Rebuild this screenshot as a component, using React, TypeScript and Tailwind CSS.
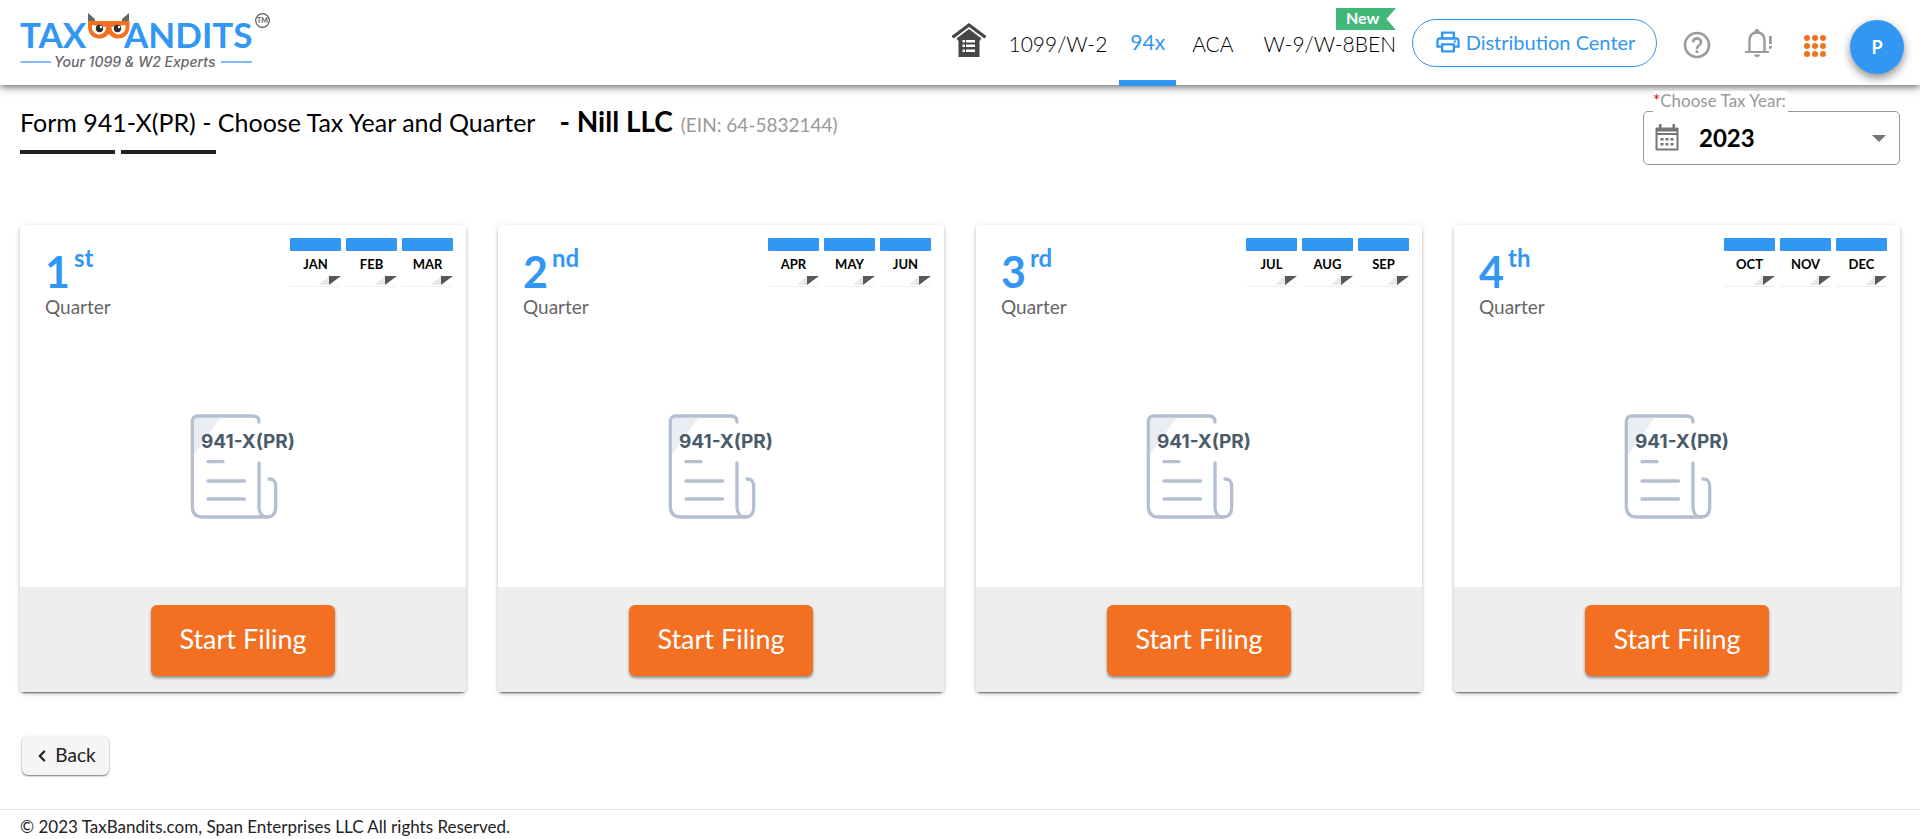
import React, { useState } from 'react';
import { ChevronLeft } from 'lucide-react';
import { MdHelpOutline, MdOutlinePrint } from 'react-icons/md';

interface Quarter {
  number: string;
  suffix: string;
  months: string[];
}

const quarters: Quarter[] = [
  { number: '1', suffix: 'st', months: ['JAN', 'FEB', 'MAR'] },
  { number: '2', suffix: 'nd', months: ['APR', 'MAY', 'JUN'] },
  { number: '3', suffix: 'rd', months: ['JUL', 'AUG', 'SEP'] },
  { number: '4', suffix: 'th', months: ['OCT', 'NOV', 'DEC'] },
];

const Logo = () => (
  <svg width="252" height="64" viewBox="0 0 252 64" role="img" aria-label="TaxBandits" className="block">
    <g fill="#3297f3" fontFamily="Lato, sans-serif" fontWeight="700" fontSize="35">
      <text x="0" y="40">TAX</text>
      <text x="104" y="40">ANDITS</text>
    </g>
    {/* Ears */}
    <path d="M68 5 L75 11 V13 H68 Z M109 5 L102 11 V13 H109 Z" fill="#63696c" />
    {/* Mask */}
    <path
      d="M68 13 H109.500 V18 C109.500 26 105 30.500 98 30.500 C93 30.500 90.500 28 88.700 26 C87 28 84.500 30.500 79.500 30.500 C72.500 30.500 68 26 68 18 Z"
      fill="#f37022"
    />
    <path d="M72 17 L86 19 A7 7 0 0 1 72 20 Z" fill="#fff" />
    <path d="M105.500 17 L91.500 19 A7 7 0 0 0 105.500 20 Z" fill="#fff" />
    <circle cx="79.500" cy="20.500" r="3.700" fill="#2c2f31" />
    <circle cx="97.500" cy="20.500" r="3.700" fill="#2c2f31" />
    <circle cx="81" cy="19" r="1.200" fill="#fff" />
    <circle cx="99" cy="19" r="1.200" fill="#fff" />
    {/* Trademark */}
    <circle cx="242.500" cy="12.500" r="6.800" fill="none" stroke="#55595c" strokeWidth="1.200" />
    <text x="242.500" y="15" textAnchor="middle" fontFamily="Lato, sans-serif" fontWeight="700" fontSize="7" fill="#55595c">
      TM
    </text>
    {/* Tagline */}
    <path d="M0.500 54 H31 M201 54 H232" stroke="#7fbdf8" strokeWidth="2" />
    <text x="34" y="59" fontFamily="Inter, sans-serif" fontStyle="italic" fontWeight="500" fontSize="14" fill="#66696c">
      Your 1099 &amp; W2 Experts
    </text>
  </svg>
);

const HomeIcon = () => (
  <svg width="34" height="34" viewBox="0 0 34 34" fill="#464646">
    <path d="M17 0 L34.500 13 L32.500 15.500 L17 4 L1.500 15.500 L-0.500 13 Z" />
    <path d="M17 6 L29.500 15.500 L27.500 18 V34 H6.500 V18 L4.500 15.500 Z" />
    <path
      d="M10.500 17 H13 V19.500 H10.500 Z M14 17 H23 V19.500 H14 Z M10.500 21.500 H13 V24 H10.500 Z M14 21.500 H23 V24 H14 Z M10.500 26.500 H13 V29 H10.500 Z M14 26.500 H23 V29 H14 Z"
      fill="#fff"
    />
  </svg>
);

const BellIcon = () => (
  <svg width="28" height="28" viewBox="0 0 28 28">
    <path
      d="M4.500 23 V12 C4.500 6 7.500 3.500 12 3.500 C16.500 3.500 19.500 6 19.500 12 V23"
      fill="none"
      stroke="#9b9b9b"
      strokeWidth="2.400"
    />
    <circle cx="12" cy="2.500" r="2.500" fill="#9b9b9b" />
    <path d="M0 22 H24 V24 H0 Z M9 25.500 H15 A3 2.500 0 0 1 9 25.500 Z" fill="#9b9b9b" />
    <path d="M24 7 H26.800 V15 H24 Z M24 17 H26.800 V19.800 H24 Z" fill="#9b9b9b" />
  </svg>
);

const AppsIcon = () => (
  <svg width="22" height="22" viewBox="0 0 22 22" fill="#f37022">
    {[3, 11, 19].map((y) => [3, 11, 19].map((x) => <circle key={`${x}-${y}`} cx={x} cy={y} r="3" />))}
  </svg>
);

const CalendarIcon = () => (
  <svg width="24" height="27" viewBox="0 0 24 27">
    <path d="M1.500 4.500 H22.500 V25.500 H1.500 Z M1.500 10 H22.500" fill="none" stroke="#757575" strokeWidth="2" strokeLinejoin="round" />
    <path d="M1.500 4 H22.500 V7.500 H1.500 Z M4 0 H6.500 V5 H4 Z M17.500 0 H20 V5 H17.500 Z" fill="#757575" />
    {[14, 19].map((y) =>
      [5.5, 10.5, 15.5].map((x) => <rect key={`${x}-${y}`} x={x} y={y} width="3" height="2.500" fill="#757575" />)
    )}
  </svg>
);

const FormIcon = () => (
  <svg width="108" height="108" viewBox="0 0 108 108" className="block">
    <path d="M5 5 H31 L5 42 Z" fill="#e9edf4" />
    <g fill="none" stroke="#b4bfd0" strokeWidth="3.300" strokeLinecap="round">
      <path d="M70 9 C70 5 68 3 64 3 H9 C5 3 3.300 5 3.300 9 V93 C3.300 100 7 104 14 104 H78 C84 104 86.700 100 86.700 94 V74 C86.700 68 84.500 66 80 66" />
      <path d="M70 50 V94 C70 100 73 104 78.500 104" />
      <path d="M19 48.700 H34 M19 68 H55.500 M19 86 H55.500" />
    </g>
    <text x="12" y="35" fontFamily="Inter, sans-serif" fontWeight="700" fontSize="19" fill="#4a5b6a">
      941-X(PR)
    </text>
  </svg>
);

const MonthSheet = ({ month }: { month: string }) => (
  <div className="relative w-[51px] h-[49px] rounded-xs border-b border-[#eeeeee] text-center">
    <div className="h-[13px] bg-[#3297f3] rounded-[1px]" />
    <p className="pt-1 text-[13px] leading-[18px] font-bold text-black">{month}</p>
    <svg width="22" height="11" viewBox="0 0 22 11" className="absolute right-0 bottom-0">
      <path d="M0 10 L10 1 V10 Z" fill="#e9e9e9" />
      <path d="M10 1 H22 L10 10 Z" fill="#58595b" />
    </svg>
  </div>
);

const QuarterCard = ({ quarter }: { quarter: Quarter }) => (
  <section className="flex flex-col rounded bg-white overflow-hidden shadow-[0_3px_1px_-2px_rgba(0,0,0,0.4),0_2px_3px_0_rgba(0,0,0,0.2),0_1px_6px_0_rgba(0,0,0,0.12)]">
    <div className="flex justify-between pl-[25px] pr-[13px] pt-[13px]">
      <div>
        <h2 className="flex items-start h-[57px] gap-1 text-[#3297f3]">
          <span className="min-w-6 pt-2 text-right text-[43px] leading-[52px] font-bold">{quarter.number}</span>
          <span className="pt-1 text-[24px] leading-[32px] font-bold">{quarter.suffix}</span>
        </h2>
        <p className="text-[19px] leading-[24px] text-[#666666]">Quarter</p>
      </div>
      <div className="flex gap-[5px]">
        {quarter.months.map((month) => (
          <MonthSheet key={month} month={month} />
        ))}
      </div>
    </div>
    <div className="flex justify-center pt-[94px] pb-[66px]">
      <FormIcon />
    </div>
    <div className="flex justify-center bg-[#eeeeee] pt-[18px] pb-4">
      <button
        type="button"
        className="h-[71px] px-7 pb-[2px] rounded-md bg-[#f37022] text-white text-[27px] shadow-[0_2px_3px_rgba(0,0,0,0.4)]"
      >
        Start Filing
      </button>
    </div>
  </section>
);

const App: React.FC = () => {
  const [taxYear, setTaxYear] = useState('2023');

  return (
    <div className="min-h-screen bg-white font-[Lato,sans-serif] text-[#222222]">
      {/* Top navigation */}
      <header className="relative flex items-start justify-between h-[85px] pl-5 pr-4 bg-white shadow-[0_2px_8px_rgba(0,0,0,0.6)]">
        <a href="#" className="pt-2">
          <Logo />
        </a>
        <div className="flex items-start">
          <nav className="flex items-start text-[21px] leading-[28px] font-light text-black">
            <a href="#" aria-label="Home" className="pt-[23px]">
              <HomeIcon />
            </a>
            <a href="#" className="ml-[22px] pt-[30px]">1099/W-2</a>
            <a href="#" className="ml-3 px-[11px] pt-[28px] h-[86px] border-b-6 border-[#3297f3] text-[#3297f3] font-normal">94x</a>
            <a href="#" className="ml-4 pt-[30px]">ACA</a>
            <a href="#" className="relative ml-[30px] pt-[30px]">
              W-9/W-8BEN
              <span className="absolute right-0 top-2 w-[60px] h-[22px] pl-[10px] bg-[#41b878] text-white text-[16px] leading-[20px] font-bold [clip-path:polygon(0_0,100%_0,84%_50%,100%_100%,0_100%)]">
                New
              </span>
            </a>
          </nav>
          <button
            type="button"
            className="flex items-center justify-center gap-1 w-[245px] h-12 mt-[19px] ml-4 rounded-full border border-[#3297f3] pb-[2px] text-[#3297f3] text-[20px]"
          >
            <MdOutlinePrint size={28} />
            Distribution Center
          </button>
          <button type="button" aria-label="Help" className="mt-[29px] ml-6 text-[#9b9b9b]">
            <MdHelpOutline size={32} />
          </button>
          <button type="button" aria-label="Notifications" className="mt-[29px] ml-8">
            <BellIcon />
          </button>
          <button type="button" aria-label="Apps" className="mt-[35px] ml-[31px]">
            <AppsIcon />
          </button>
          <button
            type="button"
            className="w-[54px] h-[54px] mt-5 ml-6 rounded-full bg-[#3297f3] text-white text-[18px] font-bold shadow-[0_4px_10px_rgba(0,0,0,0.45)]"
          >
            P
          </button>
        </div>
      </header>

      <main className="px-5">
        {/* Page title and year picker */}
        <div className="flex items-start justify-between h-[140px]">
          <div className="pt-[18px]">
            <h1 className="flex items-baseline h-9 text-black text-[25px] leading-[36px]">
              Form 941-X(PR) - Choose Tax Year and Quarter
              <strong className="ml-6 text-[28px]">- Nill LLC</strong>
              <span className="ml-2 text-[19px] text-[#999999]">(EIN: 64-5832144)</span>
            </h1>
            <div className="flex gap-[6px] mt-[11px]">
              <div className="w-[95px] h-1 bg-[#222222]" />
              <div className="w-[95px] h-1 bg-[#222222]" />
            </div>
          </div>
          <div className="relative w-[257px] mt-[26px]">
            <label
              htmlFor="tax-year"
              className="absolute left-[10px] -top-5 pr-[2px] pb-[2px] bg-white text-[17px] leading-[20px] text-[#999999]"
            >
              <span className="text-red-600">*</span>Choose Tax Year:
            </label>
            <span className="absolute left-3 top-[13px]">
              <CalendarIcon />
            </span>
            <select
              id="tax-year"
              value={taxYear}
              onChange={(e) => setTaxYear(e.target.value)}
              className="w-full h-[54px] pl-[55px] rounded-[5px] border border-[#999999] appearance-none text-[24px] font-bold text-black"
            >
              <option>2023</option>
              <option>2022</option>
              <option>2021</option>
            </select>
            <svg width="14" height="7" viewBox="0 0 14 7" className="absolute right-[14px] top-6 pointer-events-none">
              <path d="M0 0 H14 L7 7 Z" fill="#757575" />
            </svg>
          </div>
        </div>

        {/* Quarters */}
        <div className="grid grid-cols-4 gap-8">
          {quarters.map((quarter) => (
            <QuarterCard key={quarter.number} quarter={quarter} />
          ))}
        </div>

        <button
          type="button"
          className="flex items-center justify-center gap-1 w-[87px] h-[39px] mt-11 ml-[2px] pr-[2px] rounded-md bg-[#f5f5f5] text-[19px] shadow-[0_1px_2px_rgba(0,0,0,0.55)]"
        >
          <ChevronLeft size={18} strokeWidth={3} />
          Back
        </button>
      </main>

      <footer className="mt-[34px] px-5 py-[6px] border-t border-[#e5e5e5] text-[17px] leading-[22px]">
        © 2023 TaxBandits.com, Span Enterprises LLC All rights Reserved.
      </footer>
    </div>
  );
};

export default App;
